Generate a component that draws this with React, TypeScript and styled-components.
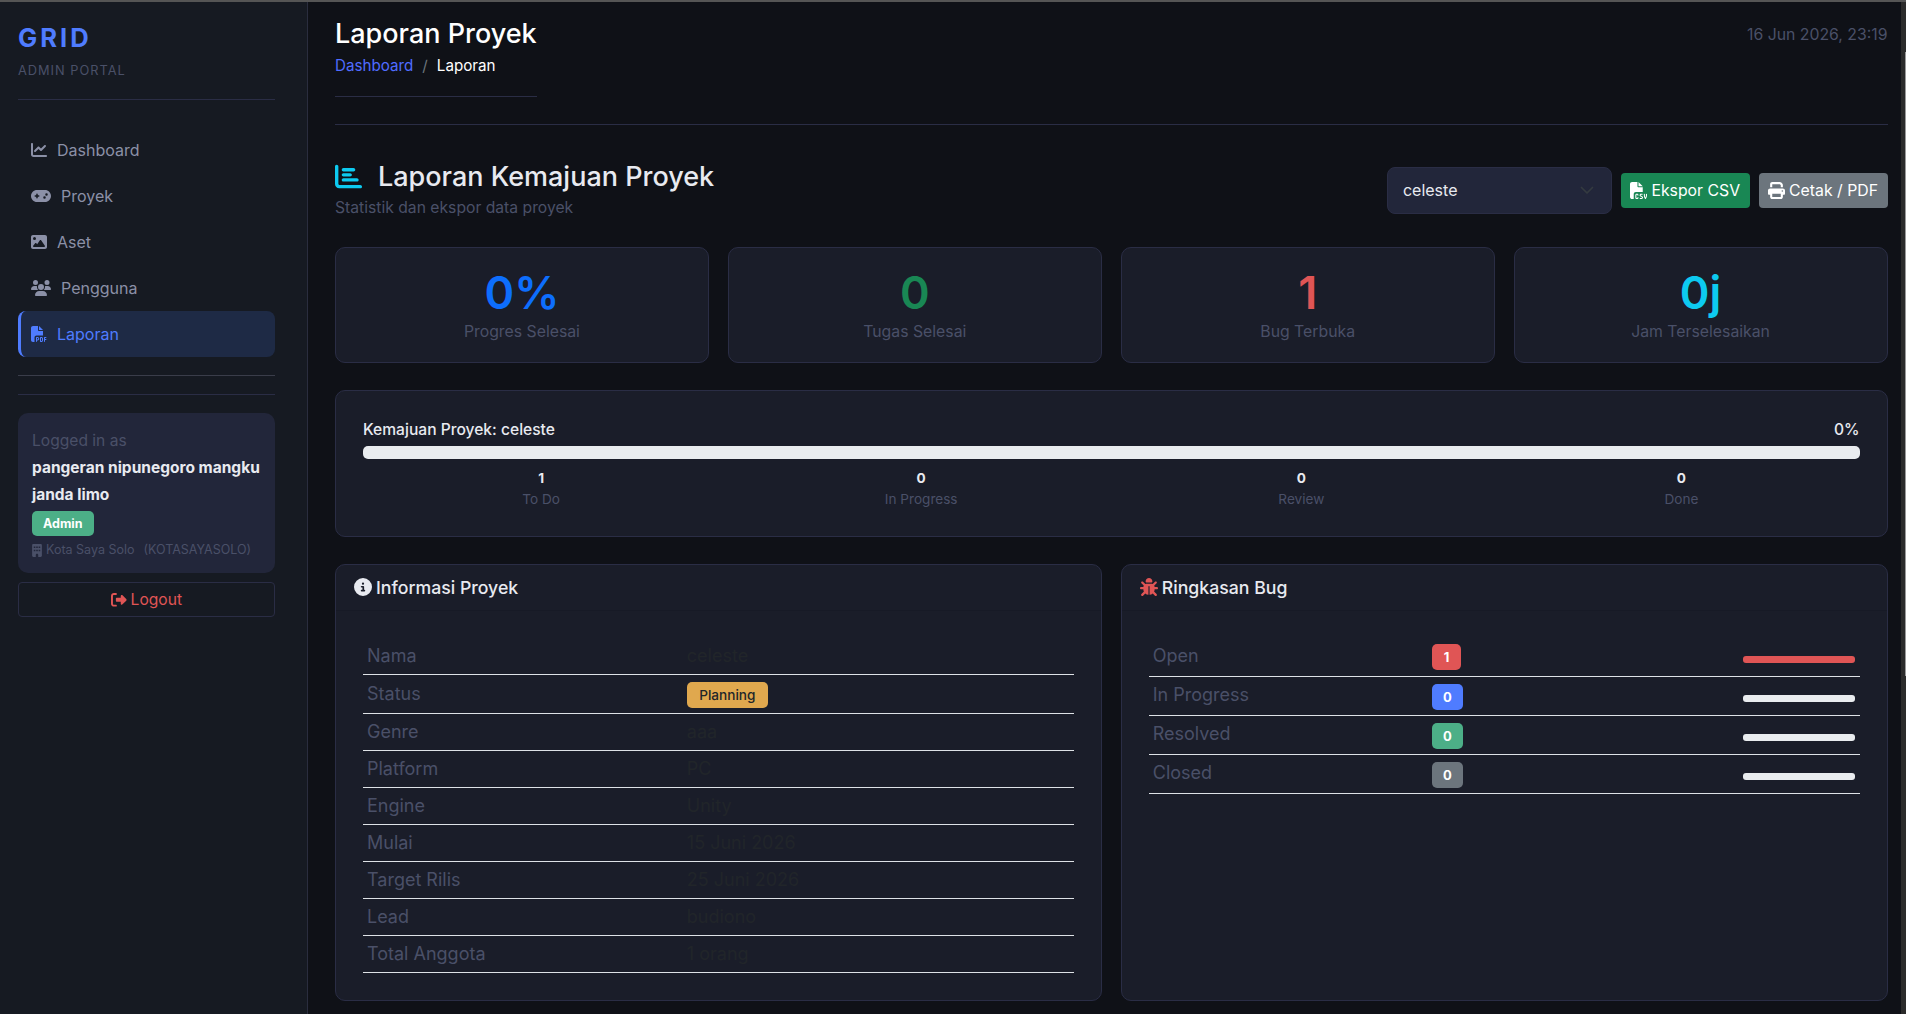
import React from "react";
import styled, { createGlobalStyle } from "styled-components";
import {
  FaBug,
  FaBuilding,
  FaChartBar,
  FaChartLine,
  FaCircleInfo,
  FaFileCsv,
  FaFilePdf,
  FaGamepad,
  FaImage,
  FaPrint,
  FaRightFromBracket,
  FaUsers,
} from "react-icons/fa6";

const GlobalStyle = createGlobalStyle`
  * { box-sizing: border-box; }
  html, body { margin: 0; height: 100%; overflow: hidden; background: #0f1117; }
  body { font-family: Inter, "Noto Sans", sans-serif; font-size: 16px; color: #e8eaf0; }
`;

const Shell = styled.div`
  height: 100vh;
  display: flex;
  flex-direction: column;
`;

const WindowEdge = styled.div`
  height: 2px;
  flex: none;
  background: #555;
`;

const Body = styled.div`
  flex: 1;
  min-height: 0;
  display: flex;
`;

const Sidebar = styled.aside`
  width: 308px;
  flex: none;
  padding: 21px 32px 0 18px;
  background: #161a22;
  border-right: 1px solid #2a2d3e;
`;

const Brand = styled.div`
  color: #4f7cff;
  font-size: 25.6px;
  font-weight: 700;
  letter-spacing: 3px;
  line-height: 29px;
`;

const BrandSub = styled.div`
  margin-top: 11px;
  color: #4a5068;
  font-size: 12.8px;
  letter-spacing: 1px;
  line-height: 15px;
`;

const SideRule = styled.hr<{ $tone?: string; $top: number }>`
  margin: ${(p) => p.$top}px 0 0;
  border: 0;
  border-top: 1px solid ${(p) => p.$tone || "#2a2d45"};
`;

const Nav = styled.nav`
  margin-top: 27px;
`;

const NavItem = styled.a<{ $active?: boolean; $wideIcon?: boolean }>`
  height: 46px;
  display: flex;
  align-items: center;
  gap: 10px;
  padding-left: 10px;
  border-left: 3px solid ${(p) => (p.$active ? "#4f7cff" : "transparent")};
  border-radius: 8px;
  background: ${(p) => (p.$active ? "#1e2a45" : "transparent")};
  color: ${(p) => (p.$active ? "#4f7cff" : "#8b90a7")};
  svg { width: ${(p) => (p.$wideIcon ? 20 : 16)}px; height: 16px; }
`;

const UserCard = styled.div`
  margin-top: 18px;
  height: 160px;
  padding: 16px 14px;
  border-radius: 10px;
  background: #22263a;
`;

const UserHint = styled.div`
  margin-bottom: 2px;
  color: #4a5068;
  font-size: 15.6px;
  line-height: 23px;
`;

const UserName = styled.div`
  color: #e8eaf0;
  font-size: 15.5px;
  font-weight: 700;
  line-height: 27px;
`;

const RoleBadge = styled.span`
  display: inline-block;
  margin-top: 3px;
  padding: 0 11px;
  border-radius: 5px;
  background: #4caf87;
  color: #fff;
  font-size: 12.5px;
  font-weight: 700;
  line-height: 25px;
`;

const OrgLine = styled.div`
  margin-top: 4px;
  display: flex;
  align-items: center;
  gap: 4px;
  color: #4a5068;
  font-size: 12.5px;
  line-height: 20px;
  white-space: pre;
  svg { width: 10px; height: 13px; }
`;

const OrgCode = styled.span`
  margin-left: 5px;
`;

const LogoutButton = styled.button`
  margin-top: 9px;
  width: 100%;
  height: 35px;
  display: flex;
  align-items: center;
  justify-content: center;
  gap: 4px;
  border: 1px solid #2a2d45;
  border-radius: 4px;
  background: transparent;
  color: #e05555;
  font: inherit;
  font-size: 15.6px;
`;

const Main = styled.main`
  flex: 1;
  min-width: 0;
  padding: 0 13.5px 0 27px;
  overflow: hidden;
`;

const PageHead = styled.header`
  display: flex;
  justify-content: space-between;
  align-items: flex-start;
  padding-top: 16px;
  padding-bottom: 27px;
  border-bottom: 1px solid #2a2d45;
`;

const HeadLeft = styled.div`
  padding-bottom: 19px;
  border-bottom: 1px solid #2a2d45;
`;

const PageTitle = styled.h1`
  margin: 0;
  color: #fff;
  font-size: 27px;
  font-weight: 500;
  line-height: 32px;
`;

const Crumbs = styled.div`
  margin-top: 3.6px;
  display: flex;
  gap: 9px;
  font-size: 15.2px;
  line-height: 23px;
`;

const CrumbLink = styled.a`
  color: #4f6cff;
`;

const CrumbSep = styled.span`
  color: #6c757d;
`;

const CrumbNow = styled.span`
  color: #fff;
`;

const DateText = styled.div`
  margin-top: 7px;
  color: #4a5068;
  font-size: 15.8px;
  line-height: 20px;
`;

const SectionHead = styled.section`
  margin-top: 32px;
  display: flex;
  justify-content: space-between;
  align-items: flex-start;
`;

const SectionTitle = styled.h2`
  margin: 0;
  display: flex;
  align-items: center;
  gap: 16px;
  color: #e8eaf0;
  font-size: 27px;
  font-weight: 500;
  line-height: 40px;
  svg { color: #0dcaf0; font-size: 27px; }
`;

const SectionSub = styled.div`
  color: #4a5068;
  font-size: 15.7px;
  line-height: 22px;
`;

const Actions = styled.div`
  margin-top: 10px;
  display: flex;
  align-items: center;
  gap: 9px;
`;

const ProjectSelect = styled.div`
  width: 225px;
  height: 47px;
  display: flex;
  align-items: center;
  justify-content: space-between;
  padding: 0 16px 0 15px;
  border: 1px solid #2a2d45;
  border-radius: 8px;
  background: #22263a;
  color: #e8eaf0;
`;

const ActionButton = styled.button<{ $bg: string }>`
  height: 35px;
  display: flex;
  align-items: center;
  gap: 4px;
  padding: 0 9.5px;
  border: 0;
  border-radius: 4px;
  background: ${(p) => p.$bg};
  color: #fff;
  font: inherit;
  font-size: 15.8px;
  svg { width: 17px; height: 17px; }
`;

const StatGrid = styled.div`
  margin-top: 28px;
  display: grid;
  grid-template-columns: repeat(4, 1fr);
  gap: 19px;
`;

const StatCard = styled.div`
  height: 116px;
  padding-top: 19px;
  border: 1px solid #2a2d45;
  border-radius: 10px;
  background: #1a1d29;
  text-align: center;
`;

const StatValue = styled.div<{ $color: string }>`
  color: ${(p) => p.$color};
  font-size: 45px;
  font-weight: 600;
  line-height: 52px;
`;

const StatLabel = styled.div`
  margin-top: 1px;
  color: #4a5068;
  font-size: 15.8px;
  line-height: 24px;
`;

const ProgressCard = styled.div`
  margin-top: 27px;
  height: 147px;
  padding: 28px 27px;
  border: 1px solid #2a2d45;
  border-radius: 10px;
  background: #1a1d29;
`;

const ProgressHead = styled.div`
  display: flex;
  justify-content: space-between;
  color: #e8eaf0;
  font-size: 15.6px;
  font-weight: 500;
  line-height: 22px;
`;

const Bar = styled.div`
  margin-top: 5px;
  height: 13px;
  border-radius: 5px;
  background: #e9ecef;
`;

const CountGrid = styled.div`
  margin: 9px -12px 0;
  display: grid;
  grid-template-columns: repeat(4, 1fr);
  text-align: center;
`;

const CountValue = styled.div`
  color: #e8eaf0;
  font-size: 13.6px;
  font-weight: 700;
  line-height: 20px;
`;

const CountLabel = styled.div`
  margin-top: 1px;
  color: #4a5068;
  font-size: 13.6px;
  line-height: 20px;
`;

const PanelGrid = styled.div`
  margin-top: 27px;
  display: grid;
  grid-template-columns: 1fr 1fr;
  gap: 19px;
`;

const Panel = styled.div`
  height: 437px;
  border: 1px solid #2a2d45;
  border-radius: 10px;
  background: #1a1d29;
`;

const PanelHead = styled.div`
  height: 46px;
  display: flex;
  align-items: center;
  gap: 4px;
  padding-left: 18px;
  border-bottom: 1px solid #171a26;
  color: #e8eaf0;
  font-size: 17.7px;
  font-weight: 500;
`;

const InfoGlyph = styled(FaCircleInfo)`
  color: #e8eaf0;
  font-size: 18px;
`;

const BugGlyph = styled(FaBug)`
  color: #e05555;
  font-size: 18px;
`;

const PanelBody = styled.div`
  padding: 27px 27px 0;
`;

const DataTable = styled.table`
  width: 100%;
  border-collapse: collapse;
  font-size: 18px;
`;

const DataRow = styled.tr<{ $height?: number }>`
  height: ${(p) => p.$height || 37}px;
  border-bottom: 1px solid #dee2e6;
`;

const KeyCell = styled.td<{ $width: string; $lift?: number }>`
  width: ${(p) => p.$width};
  padding: 0 5px ${(p) => p.$lift || 1}px 4px;
  color: #4a5068;
  vertical-align: middle;
`;

const ValueCell = styled.td`
  padding: 0 0 1px 4px;
  color: #212529;
  vertical-align: middle;
`;

const PlanningBadge = styled.span`
  display: block;
  width: 81px;
  margin-top: 2px;
  border-radius: 5px;
  background: #e0a84e;
  color: #212529;
  font-size: 13.6px;
  font-weight: 500;
  line-height: 26px;
  text-align: center;
`;

const CountBadge = styled.span<{ $color: string }>`
  display: block;
  width: fit-content;
  min-width: 29px;
  margin-top: 2px;
  padding: 0 11px;
  border-radius: 5px;
  background: ${(p) => p.$color};
  color: #fff;
  font-size: 13px;
  font-weight: 700;
  line-height: 26px;
  text-align: center;
`;

const BarCell = styled.td`
  width: 117px;
  padding: 5px 5px 0 0;
`;

const MiniBar = styled.div<{ $color: string }>`
  height: 6.5px;
  border-radius: 3px;
  background: ${(p) => p.$color};
`;

const ScrollTrack = styled.div`
  width: 5px;
  flex: none;
  padding-top: 50px;
  background: #2b2b2b;
`;

const ScrollThumb = styled.div`
  height: 624px;
  margin-left: 4px;
  background: #9a9a9a;
`;

const SelectArrow = () => (
  <svg width="16" height="16" viewBox="0 0 16 16" fill="none">
    <path d="M2.5 5.5l5.5 5.5 5.5-5.5" stroke="#343a40" strokeWidth="1.7" strokeLinecap="round" strokeLinejoin="round" />
  </svg>
);

const navItems = [
  { label: "Dashboard", icon: <FaChartLine /> },
  { label: "Proyek", icon: <FaGamepad />, wide: true },
  { label: "Aset", icon: <FaImage /> },
  { label: "Pengguna", icon: <FaUsers />, wide: true },
  { label: "Laporan", icon: <FaFilePdf />, active: true },
];

const stats = [
  { value: "0%", label: "Progres Selesai", color: "#0d6efd" },
  { value: "0", label: "Tugas Selesai", color: "#198754" },
  { value: "1", label: "Bug Terbuka", color: "#e05555" },
  { value: "0j", label: "Jam Terselesaikan", color: "#0dcaf0" },
];

const counts = [
  { value: 1, label: "To Do" },
  { value: 0, label: "In Progress" },
  { value: 0, label: "Review" },
  { value: 0, label: "Done" },
];

const info = [
  { key: "Nama", value: "celeste" },
  { key: "Status", badge: "Planning" },
  { key: "Genre", value: "aaa" },
  { key: "Platform", value: "PC" },
  { key: "Engine", value: "Unity" },
  { key: "Mulai", value: "15 Juni 2026" },
  { key: "Target Rilis", value: "25 Juni 2026" },
  { key: "Lead", value: "budiono" },
  { key: "Total Anggota", value: "1 orang" },
];

const bugs = [
  { label: "Open", value: 1, color: "#e05555", bar: "#e05555" },
  { label: "In Progress", value: 0, color: "#4f7cff", bar: "#e9ecef" },
  { label: "Resolved", value: 0, color: "#4caf87", bar: "#e9ecef" },
  { label: "Closed", value: 0, color: "#6c757d", bar: "#e9ecef" },
];

const App = () => {
  return (
    <Shell>
      <GlobalStyle />
      <WindowEdge />
      <Body>
        <Sidebar>
          <Brand>GRID</Brand>
          <BrandSub>ADMIN PORTAL</BrandSub>
          <SideRule $top={21} />
          <Nav>
            {navItems.map((item) => (
              <NavItem key={item.label} $active={item.active} $wideIcon={item.wide}>
                {item.icon}
                {item.label}
              </NavItem>
            ))}
          </Nav>
          <SideRule $top={18} $tone="#3a3d4a" />
          <SideRule $top={18} />
          <UserCard>
            <UserHint>Logged in as</UserHint>
            <UserName>pangeran nipunegoro mangku janda limo</UserName>
            <RoleBadge>Admin</RoleBadge>
            <OrgLine>
              <FaBuilding />
              Kota Saya Solo
              <OrgCode>(KOTASAYASOLO)</OrgCode>
            </OrgLine>
          </UserCard>
          <LogoutButton>
            <FaRightFromBracket />
            Logout
          </LogoutButton>
        </Sidebar>
        <Main>
          <PageHead>
            <HeadLeft>
              <PageTitle>Laporan Proyek</PageTitle>
              <Crumbs>
                <CrumbLink>Dashboard</CrumbLink>
                <CrumbSep>/</CrumbSep>
                <CrumbNow>Laporan</CrumbNow>
              </Crumbs>
            </HeadLeft>
            <DateText>16 Jun 2026, 23:19</DateText>
          </PageHead>
          <SectionHead>
            <div>
              <SectionTitle>
                <FaChartBar />
                Laporan Kemajuan Proyek
              </SectionTitle>
              <SectionSub>Statistik dan ekspor data proyek</SectionSub>
            </div>
            <Actions>
              <ProjectSelect>
                celeste
                <SelectArrow />
              </ProjectSelect>
              <ActionButton $bg="#198754">
                <FaFileCsv />
                Ekspor CSV
              </ActionButton>
              <ActionButton $bg="#6c757d">
                <FaPrint />
                Cetak / PDF
              </ActionButton>
            </Actions>
          </SectionHead>
          <StatGrid>
            {stats.map((stat) => (
              <StatCard key={stat.label}>
                <StatValue $color={stat.color}>{stat.value}</StatValue>
                <StatLabel>{stat.label}</StatLabel>
              </StatCard>
            ))}
          </StatGrid>
          <ProgressCard>
            <ProgressHead>
              <span>Kemajuan Proyek: celeste</span>
              <span>0%</span>
            </ProgressHead>
            <Bar />
            <CountGrid>
              {counts.map((count) => (
                <div key={count.label}>
                  <CountValue>{count.value}</CountValue>
                  <CountLabel>{count.label}</CountLabel>
                </div>
              ))}
            </CountGrid>
          </ProgressCard>
          <PanelGrid>
            <Panel>
              <PanelHead>
                <InfoGlyph />
                Informasi Proyek
              </PanelHead>
              <PanelBody>
                <DataTable>
                  <tbody>
                    {info.map((row) => (
                      <DataRow key={row.key} $height={row.badge ? 39 : 37}>
                        <KeyCell $width="45%">{row.key}</KeyCell>
                        <ValueCell>
                          {row.badge ? <PlanningBadge>{row.badge}</PlanningBadge> : row.value}
                        </ValueCell>
                      </DataRow>
                    ))}
                  </tbody>
                </DataTable>
              </PanelBody>
            </Panel>
            <Panel>
              <PanelHead>
                <BugGlyph />
                Ringkasan Bug
              </PanelHead>
              <PanelBody>
                <DataTable>
                  <tbody>
                    {bugs.map((bug) => (
                      <DataRow key={bug.label} $height={39}>
                        <KeyCell $width="39.3%" $lift={3}>{bug.label}</KeyCell>
                        <ValueCell>
                          <CountBadge $color={bug.color}>{bug.value}</CountBadge>
                        </ValueCell>
                        <BarCell>
                          <MiniBar $color={bug.bar} />
                        </BarCell>
                      </DataRow>
                    ))}
                  </tbody>
                </DataTable>
              </PanelBody>
            </Panel>
          </PanelGrid>
        </Main>
        <ScrollTrack>
          <ScrollThumb />
        </ScrollTrack>
      </Body>
    </Shell>
  );
};

export default App;
